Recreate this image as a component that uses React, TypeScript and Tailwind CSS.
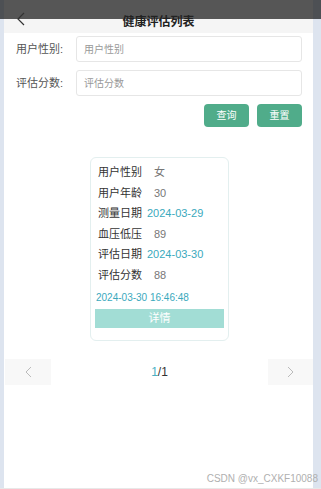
import React from 'react';

const font = { fontFamily: '"Liberation Sans", "Noto Sans CJK SC", sans-serif' };

function Row({ label, value, tone }: { label: string; value: string; tone: 'date' | 'plain' }) {
  return (
    <div className="flex items-center h-[20.5px] text-[11px] whitespace-nowrap">
      <span className="w-[44px] shrink-0 text-[#333]">{label}</span>
      {tone === 'date' ? (
        <span className="ml-[5px] text-[#3aa9bd]">{value}</span>
      ) : (
        <span className="ml-[12px] text-[#777]">{value}</span>
      )}
    </div>
  );
}

export default function App() {
  return (
    <div className="relative h-[489px] w-[321px] overflow-hidden bg-[#dde4ef]" style={font}>
      {/* dark status overlay */}
      <div className="absolute left-0 top-0 z-10 h-[19px] w-full bg-black/65" />

      <div className="ml-[4px] h-[488px] w-[309px] bg-white">
        {/* header */}
        <div className="relative flex h-[33px] items-center justify-center bg-[#f5f5f5]">
          <svg className="absolute left-[12px] top-[12px] z-20" width="10" height="14" viewBox="0 0 10 14">
            <polyline points="8,1 2,7 8,13" fill="none" stroke="#333" strokeWidth="1.2" />
          </svg>
          <h1 className="relative z-20 mt-[10px] text-[12px] font-bold text-[#222]">健康评估列表</h1>
        </div>

        {/* filters */}
        <div className="pl-[12px] pr-[11px] pt-[3px]">
          <div className="flex items-center">
            <label className="w-[60px] shrink-0 whitespace-nowrap text-[11px] text-[#555]">用户性别:</label>
            <div className="flex h-[26px] flex-1 items-center rounded-[3px] border border-[#e6e6e6] pl-[7px] text-[10px] text-[#999]">
              用户性别
            </div>
          </div>
          <div className="mt-[8px] flex items-center">
            <label className="w-[60px] shrink-0 whitespace-nowrap text-[11px] text-[#555]">评估分数:</label>
            <div className="flex h-[26px] flex-1 items-center rounded-[3px] border border-[#e6e6e6] pl-[7px] text-[10px] text-[#999]">
              评估分数
            </div>
          </div>
          <div className="mt-[8px] flex justify-end gap-[8px]">
            <button className="h-[23px] w-[45px] rounded-[4px] bg-[#50ac8a] text-[10px] text-white">查询</button>
            <button className="h-[23px] w-[45px] rounded-[4px] bg-[#50ac8a] text-[10px] text-white">重置</button>
          </div>
        </div>

        {/* card */}
        <div className="mt-[30px] ml-[86px] w-[139px] rounded-[6px] border border-[#e3efef] px-[4px] pb-[11px] pt-[4px]">
          <div className="pl-[3px]">
            <Row label="用户性别" value="女" tone="plain" />
            <Row label="用户年龄" value="30" tone="plain" />
            <Row label="测量日期" value="2024-03-29" tone="date" />
            <Row label="血压低压" value="89" tone="plain" />
            <Row label="评估日期" value="2024-03-30" tone="date" />
            <Row label="评估分数" value="88" tone="plain" />
          </div>
          <div className="mt-[6px] pl-[1px] whitespace-nowrap text-[10px] leading-[14px] text-[#3aa9bd]">2024-03-30 16:46:48</div>
          <button className="mt-[3px] h-[19px] w-full bg-[#a2ddd5] text-[11px] text-white">详情</button>
        </div>

        {/* pager */}
        <div className="mt-[18px] flex h-[26px] items-center justify-between pl-[1px]">
          <div className="flex h-full w-[46px] items-center justify-center bg-[#f8f8f8]">
            <svg width="7" height="12" viewBox="0 0 7 12">
              <polyline points="6,1 1,6 6,11" fill="none" stroke="#bbb" strokeWidth="1" />
            </svg>
          </div>
          <div className="text-[12px] text-[#333]">
            <span className="text-[#4ab0c4]">1</span>/1
          </div>
          <div className="flex h-full w-[45px] items-center justify-center bg-[#f8f8f8]">
            <svg width="7" height="12" viewBox="0 0 7 12">
              <polyline points="1,1 6,6 1,11" fill="none" stroke="#bbb" strokeWidth="1" />
            </svg>
          </div>
        </div>
      </div>

      <div className="absolute bottom-0 left-0 h-[1px] w-full bg-[#e8e8e8]" />
      <div className="absolute right-[3px] top-[471px] whitespace-nowrap text-[10px] text-[#b0b0b0]">CSDN @vx_CXKF10088</div>
    </div>
  );
}
